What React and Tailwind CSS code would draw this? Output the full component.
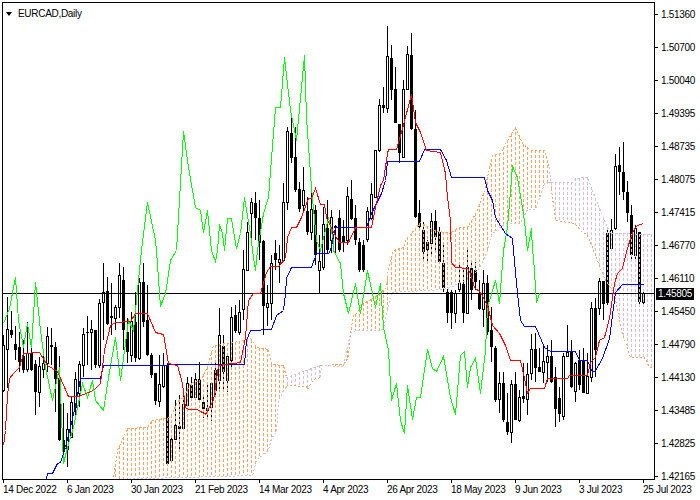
import React from "react";

const prices = ["1.51360","1.50700","1.50040","1.49395","1.48735","1.48075","1.47415","1.46770","1.46110","1.45450","1.44790","1.44130","1.43485","1.42825","1.42165"];
const dates = ["14 Dec 2022","6 Jan 2023","30 Jan 2023","21 Feb 2023","14 Mar 2023","4 Apr 2023","26 Apr 2023","18 May 2023","9 Jun 2023","3 Jul 2023","25 Jul 2023"];

// [high, low, bodyTop, bodyBottom, bear] in page pixels, one bar every 4px from x=3
const bars = [
[335,392,345,390,0],[297,388,329,349,0],[311,338,330,335,1],[326,360,344,350,1],[332,372,347,362,1],[340,373,356,370,1],[322,372,353,369,0],[345,371,353,370,1],
[360,415,364,392,1],[357,407,366,392,0],[355,378,363,369,0],[327,372,336,363,0],[328,365,345,345,0],[342,412,347,379,1],[356,441,378,440,1],[403,464,440,449,1],
[413,467,429,449,0],[397,438,402,437,0],[372,418,379,407,0],[361,407,364,393,0],[328,377,334,365,0],[316,365,332,333,1],[320,370,329,332,0],[330,368,330,365,1],
[299,368,303,365,0],[263,340,292,302,0],[277,325,291,324,1],[283,335,316,318,1],[305,330,307,318,0],[263,318,275,307,0],[267,350,280,330,1],[318,363,332,352,1],
[312,362,321,355,0],[292,362,322,358,1],[278,360,282,358,0],[263,327,282,322,1],[285,356,320,355,1],[353,378,355,375,1],[373,405,373,401,1],[355,407,384,401,0],
[353,388,365,386,0],[363,465,365,464,1],[438,463,439,460,0],[400,440,425,439,0],[395,450,426,429,1],[393,430,404,428,0],[377,405,383,405,0],[377,400,385,398,1],
[373,398,379,397,0],[362,400,379,400,1],[395,418,402,409,1],[382,420,408,411,1],[382,421,383,407,0],[363,398,370,391,1],[308,392,335,380,0],[335,392,346,372,1],
[355,392,356,380,0],[307,370,317,360,0],[305,333,315,331,1],[300,335,312,332,0],[250,320,269,309,0],[222,271,232,270,0],[198,245,202,213,0],[192,240,203,218,1],
[200,260,218,243,1],[240,335,241,306,1],[285,326,303,307,0],[255,320,263,303,0],[240,270,253,260,1],[245,283,259,262,0],[183,262,202,260,0],[127,210,131,202,0],
[114,163,133,158,1],[127,192,157,190,1],[182,212,189,209,1],[167,212,190,205,0],[197,235,211,232,1],[190,240,209,232,0],[205,265,210,255,1],[235,294,261,270,0],
[207,270,224,267,0],[200,254,228,250,1],[210,253,217,240,0],[225,254,226,228,1],[210,252,218,250,1],[220,252,236,243,1],[187,245,196,240,0],[180,220,199,219,1],
[205,245,218,240,1],[238,272,242,270,1],[240,272,245,270,1],[207,242,211,239,0],[183,220,194,218,0],[150,197,150,197,0],[99,152,105,150,0],[87,113,105,108,1],
[26,113,56,108,0],[45,100,58,90,1],[67,123,89,123,1],[124,163,124,153,1],[80,157,89,157,0],[46,90,54,89,0],[33,130,55,129,1],[110,218,129,217,1],
[200,230,213,227,1],[222,261,230,252,1],[240,263,242,250,1],[213,255,221,243,0],[210,250,221,237,1],[227,264,232,262,1],[245,292,263,288,1],[289,323,292,313,1],
[290,329,292,313,1],[290,323,293,313,0],[265,292,283,289,0],[268,323,284,313,1],[250,314,267,313,0],[262,300,268,290,1],[262,290,270,282,1],[280,310,293,309,1],
[270,327,283,309,0],[275,335,283,332,1],[307,362,330,347,1],[346,402,348,400,1],[372,413,383,399,0],[372,422,383,420,1],[393,435,422,432,1],[380,443,384,432,0],
[372,420,384,420,1],[390,422,397,420,0],[363,403,396,399,1],[363,415,374,399,0],[334,380,349,373,0],[333,382,349,368,1],[348,372,367,372,1],[345,383,361,372,0],
[345,382,356,362,0],[340,383,356,382,1],[367,427,377,409,1],[387,422,398,414,1],[353,420,356,416,0],[325,356,352,356,0],[340,388,352,387,1],[362,402,363,391,0],
[350,390,360,385,1],[348,393,361,393,1],[353,393,376,393,0],[302,382,308,377,0],[298,377,308,350,1],[278,315,281,308,0],[282,320,281,304,1],[230,305,233,303,1],
[219,250,230,248,0],[154,230,166,228,0],[147,195,165,172,1],[142,200,172,192,1],[181,222,192,213,1],[205,260,215,255,1],[225,260,228,255,0],[232,304,232,302,1],
[290,304,293,302,0],
];

const tenkan = [[3,445],[5,430],[7,395],[9,378],[13,373],[19,367],[23,353],[39,352],[47,365],[57,371],[68,396],[78,396],[93,390],[100,383],[104,350],[110,325],[115,322],[130,321],[135,313],[147,313],[155,332],[163,334],[168,363],[177,365],[182,383],[185,407],[188,409],[197,409],[205,414],[213,400],[218,365],[240,362],[245,337],[248,300],[253,293],[260,293],[266,272],[270,266],[278,266],[285,258],[287,237],[291,227],[296,227],[301,217],[308,198],[311,198],[315,188],[320,204],[324,204],[326,217],[333,232],[339,242],[348,242],[355,227],[371,227],[375,207],[380,185],[383,180],[387,153],[388,149],[396,149],[401,132],[406,113],[411,94],[415,122],[420,132],[426,150],[440,152],[445,173],[447,197],[450,220],[451,262],[455,267],[467,268],[470,273],[474,287],[480,292],[487,305],[492,325],[499,333],[505,345],[510,360],[520,360],[524,378],[527,393],[530,388],[544,388],[547,378],[567,378],[569,375],[587,375],[590,362],[595,357],[599,340],[604,337],[609,318],[614,283],[617,273],[622,268],[625,255],[630,238],[634,228],[637,225],[643,223]];
const kijun = [[46,479],[47,473],[52,473],[57,463],[60,462],[65,447],[70,427],[75,405],[80,378],[100,378],[103,365],[233,364],[244,364],[246,340],[250,330],[271,329],[276,315],[283,310],[285,293],[286,278],[291,267],[311,267],[316,253],[328,253],[330,250],[335,227],[366,227],[371,213],[381,193],[385,180],[387,161],[419,161],[424,149],[440,149],[446,160],[451,177],[484,177],[487,190],[492,200],[495,217],[505,233],[512,238],[513,250],[517,293],[520,320],[524,326],[535,326],[544,347],[550,351],[575,351],[579,360],[587,360],[592,372],[595,370],[602,358],[609,338],[613,307],[615,292],[622,284],[643,284]];
const chikou = [[3,323],[9,308],[15,277],[18,320],[23,347],[27,323],[31,347],[35,282],[40,330],[45,367],[52,400],[59,367],[63,463],[67,447],[73,427],[82,383],[87,397],[92,380],[95,400],[103,410],[108,377],[115,337],[120,380],[128,320],[133,330],[141,250],[147,202],[155,240],[156,250],[160,306],[165,293],[170,260],[176,250],[183,131],[188,167],[195,207],[200,210],[203,232],[207,210],[211,250],[215,261],[217,250],[219,224],[222,233],[224,250],[227,218],[231,218],[233,230],[236,248],[240,233],[244,197],[250,233],[252,250],[255,270],[257,250],[263,213],[268,197],[275,107],[280,107],[284,57],[290,110],[296,140],[304,55],[306,117],[311,187],[316,240],[320,250],[328,217],[333,240],[333,250],[340,263],[343,293],[348,313],[355,283],[360,313],[367,270],[375,307],[380,283],[383,327],[388,350],[391,400],[396,383],[400,420],[404,433],[407,385],[412,419],[416,397],[420,397],[427,349],[432,368],[436,371],[443,356],[450,397],[455,414],[460,355],[464,351],[467,387],[470,367],[475,358],[480,393],[485,350],[487,307],[495,280],[499,303],[503,250],[507,227],[512,166],[517,177],[524,220],[527,250],[531,228],[532,250],[533,257],[536,302],[539,293]];

const cloudTop = [[113,477],[117,450],[127,428],[147,427],[152,420],[170,417],[173,410],[178,400],[183,397],[190,383],[200,380],[207,367],[213,345],[233,342],[250,338],[256,347],[268,349],[271,364],[283,365],[286,377],[320,365],[343,364],[348,357],[350,333],[353,315],[356,313],[363,303],[373,298],[386,287],[388,267],[393,250],[403,247],[406,238],[411,233],[420,222],[433,230],[450,233],[458,227],[467,227],[477,210],[484,190],[492,155],[500,153],[507,140],[515,127],[522,143],[530,150],[544,150],[549,167],[550,182],[572,182],[575,178],[587,177],[592,190],[597,203],[607,227],[610,233],[652,234]];
const cloudBottom = [[113,479],[252,475],[256,460],[268,450],[271,438],[276,432],[278,400],[283,390],[287,385],[306,386],[307,389],[313,379],[320,377],[321,365],[343,366],[350,333],[355,330],[380,330],[383,328],[391,292],[443,289],[450,287],[458,283],[467,280],[477,270],[482,262],[487,250],[492,233],[505,223],[520,223],[527,209],[535,209],[544,183],[550,182],[555,220],[574,223],[580,230],[587,235],[592,247],[593,250],[604,278],[614,293],[617,310],[622,333],[630,357],[644,357],[649,367],[652,367]];

const at = (pts, x) => {
  for (let i = 1; i < pts.length; i++) {
    if (x <= pts[i][0]) {
      const [x0, y0] = pts[i - 1];
      const [x1, y1] = pts[i];
      return x1 === x0 ? y1 : y0 + ((y1 - y0) * (x - x0)) / (x1 - x0);
    }
  }
  return pts[pts.length - 1][1];
};

const ORANGE = "#f4a460";
const THISTLE = "#d8bfd8";
const cloudColor = (x) => (x < 286 || (x > 320 && x < 549) ? ORANGE : THISTLE);
const cloudXs = Array.from({ length: 136 }, (_, i) => 115 + i * 4);
const toPoints = (pts) => pts.map(([x, y]) => `${x + 0.5},${y + 0.5}`).join(" ");
const slice = (pts, a, b) => [[a, at(pts, a)], ...pts.filter(([x]) => x > a && x < b), [b, at(pts, b)]];

const sections = [[113, 286, ORANGE, THISTLE], [286, 320, THISTLE, ORANGE], [320, 549, ORANGE, THISTLE], [549, 652, THISTLE, ORANGE]];

function Chart() {
  return (
    <svg viewBox="3 3 651 476" width="651" height="476" className="block" shapeRendering="crispEdges">
      {bars.map(([h, l, t, b, bear], i) => {
        const x = 3 + i * 4;
        return (
          <g key={i}>
            <rect x={x} y={h} width="1" height={l - h} fill="#000" />
            {bear ? (
              <rect x={x - 1} y={t} width="3" height={Math.max(b - t, 1)} fill="#000" />
            ) : (
              <rect x={x - 0.5} y={t + 0.5} width="2" height={Math.max(b - t, 1)} fill="#fff" stroke="#000" />
            )}
          </g>
        );
      })}
      {cloudXs.map((x) => (
        <line key={x} x1={x + 0.5} x2={x + 0.5} y1={at(cloudTop, x)} y2={at(cloudBottom, x)} stroke={cloudColor(x)} strokeDasharray="3 2" />
      ))}
      {sections.map(([a, b, top, bottom]) => (
        <g key={a} fill="none" strokeDasharray="2 2">
          <polyline points={toPoints(slice(cloudTop, a, b))} stroke={top} />
          <polyline points={toPoints(slice(cloudBottom, a, b))} stroke={bottom} />
        </g>
      ))}
      <rect x="3" y="293" width="651" height="1" fill="#000" />
      <polyline points={toPoints(chikou)} fill="none" stroke="#00ff00" />
      <polyline points={toPoints(kijun)} fill="none" stroke="#0000ff" />
      <polyline points={toPoints(tenkan)} fill="none" stroke="#ff0000" />
    </svg>
  );
}

export default function App() {
  return (
    <div className="relative w-[700px] h-[500px] overflow-hidden bg-white text-black text-[10px] leading-none tracking-[-0.3px] font-['Liberation_Sans',sans-serif]">
      <div className="flex items-start h-[480px] pt-[2px] pl-[2px]">
        <div className="relative w-[653px] h-[478px] shrink-0 border border-black">
          <Chart />
          <div className="absolute left-[3px] top-[6px] flex items-center gap-[6px]">
            <span className="w-0 h-0 border-x-[3.5px] border-x-transparent border-t-[4px] border-t-black" />
            <span>EURCAD,Daily</span>
          </div>
        </div>
        <div className="flex flex-col justify-between h-[475px] mt-[6px]">
          {prices.map((p) => (
            <div key={p} className="flex items-center h-[13px]">
              <span className="w-[3px] h-px bg-black" />
              <span className="ml-[3px]">{p}</span>
            </div>
          ))}
        </div>
      </div>
      <div className="flex pl-[3px]">
        {dates.map((d) => (
          <div key={d} className="w-[64px] shrink-0">
            <div className="w-px h-[3px] bg-black" />
            <div className="mt-[2px] whitespace-nowrap">{d}</div>
          </div>
        ))}
      </div>
      <div className="absolute left-[656px] top-[288px] w-[38px] h-[12px] flex items-center justify-center bg-black text-white">1.45805</div>
    </div>
  );
}
